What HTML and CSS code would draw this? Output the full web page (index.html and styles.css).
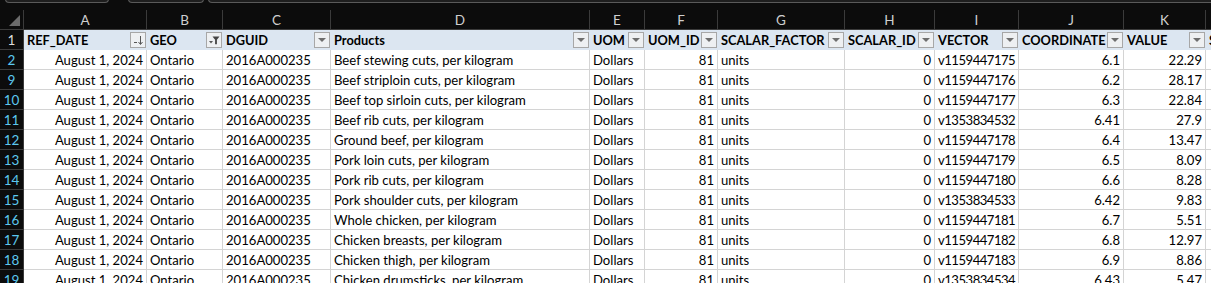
FILE: index.html
```html
<!DOCTYPE html>
<html>
<head>
<meta charset="utf-8">
<link rel="stylesheet" href="styles.css">
</head>
<body>
<div class="topbar">
  <div class="tb tb1"></div>
  <div class="tb tb2"></div>
  <div class="tb tb3"></div>
</div>
<div class="sheet">
  <div class="ch corner"><span class="tri"></span></div>
  <div class="ch">A</div><div class="ch">B</div><div class="ch">C</div><div class="ch">D</div><div class="ch">E</div><div class="ch">F</div><div class="ch">G</div><div class="ch">H</div><div class="ch">I</div><div class="ch">J</div><div class="ch">K</div><div class="ch"></div>

  <div class="rh first">1</div>
  <div class="hd"><span>REF_DATE</span><span class="fb"><svg width="14" height="14" viewBox="0 0 14 14"><path d="M3 9.5h3" stroke="#555" stroke-width="1"/><path d="M9.5 3v8" stroke="#555" stroke-width="1"/><path d="M7.5 9l2 2.5 2-2.5" fill="none" stroke="#555" stroke-width="1"/></svg></span></div>
  <div class="hd"><span>GEO</span><span class="fb"><svg width="14" height="14" viewBox="0 0 14 14"><path d="M2 8h4l-2 2.5z" fill="#555"/><path d="M5.5 3.5h7l-2.6 3.2v4.5h-1.8v-4.5z" fill="#444"/></svg></span></div>
  <div class="hd"><span>DGUID</span><span class="fb"><i class="dd"></i></span></div>
  <div class="hd"><span>Products</span><span class="fb"><i class="dd"></i></span></div>
  <div class="hd"><span>UOM</span><span class="fb"><i class="dd"></i></span></div>
  <div class="hd"><span>UOM_ID</span><span class="fb"><i class="dd"></i></span></div>
  <div class="hd"><span>SCALAR_FACTOR</span><span class="fb"><i class="dd"></i></span></div>
  <div class="hd"><span>SCALAR_ID</span><span class="fb"><i class="dd"></i></span></div>
  <div class="hd"><span>VECTOR</span><span class="fb"><i class="dd"></i></span></div>
  <div class="hd"><span>COORDINATE</span><span class="fb"><i class="dd"></i></span></div>
  <div class="hd"><span>VALUE</span><span class="fb"><i class="dd"></i></span></div>
  <div class="hd"><span>S</span></div>

  <div class="rh">2</div><div class="c r">August 1, 2024</div><div class="c">Ontario</div><div class="c">2016A000235</div><div class="c">Beef stewing cuts, per kilogram</div><div class="c">Dollars</div><div class="c r">81</div><div class="c">units</div><div class="c r">0</div><div class="c v">v1159447175</div><div class="c r">6.1</div><div class="c r">22.29</div><div class="c"></div>
  <div class="rh">9</div><div class="c r">August 1, 2024</div><div class="c">Ontario</div><div class="c">2016A000235</div><div class="c">Beef striploin cuts, per kilogram</div><div class="c">Dollars</div><div class="c r">81</div><div class="c">units</div><div class="c r">0</div><div class="c v">v1159447176</div><div class="c r">6.2</div><div class="c r">28.17</div><div class="c"></div>
  <div class="rh">10</div><div class="c r">August 1, 2024</div><div class="c">Ontario</div><div class="c">2016A000235</div><div class="c">Beef top sirloin cuts, per kilogram</div><div class="c">Dollars</div><div class="c r">81</div><div class="c">units</div><div class="c r">0</div><div class="c v">v1159447177</div><div class="c r">6.3</div><div class="c r">22.84</div><div class="c"></div>
  <div class="rh">11</div><div class="c r">August 1, 2024</div><div class="c">Ontario</div><div class="c">2016A000235</div><div class="c">Beef rib cuts, per kilogram</div><div class="c">Dollars</div><div class="c r">81</div><div class="c">units</div><div class="c r">0</div><div class="c v">v1353834532</div><div class="c r">6.41</div><div class="c r">27.9</div><div class="c"></div>
  <div class="rh">12</div><div class="c r">August 1, 2024</div><div class="c">Ontario</div><div class="c">2016A000235</div><div class="c">Ground beef, per kilogram</div><div class="c">Dollars</div><div class="c r">81</div><div class="c">units</div><div class="c r">0</div><div class="c v">v1159447178</div><div class="c r">6.4</div><div class="c r">13.47</div><div class="c"></div>
  <div class="rh">13</div><div class="c r">August 1, 2024</div><div class="c">Ontario</div><div class="c">2016A000235</div><div class="c">Pork loin cuts, per kilogram</div><div class="c">Dollars</div><div class="c r">81</div><div class="c">units</div><div class="c r">0</div><div class="c v">v1159447179</div><div class="c r">6.5</div><div class="c r">8.09</div><div class="c"></div>
  <div class="rh">14</div><div class="c r">August 1, 2024</div><div class="c">Ontario</div><div class="c">2016A000235</div><div class="c">Pork rib cuts, per kilogram</div><div class="c">Dollars</div><div class="c r">81</div><div class="c">units</div><div class="c r">0</div><div class="c v">v1159447180</div><div class="c r">6.6</div><div class="c r">8.28</div><div class="c"></div>
  <div class="rh">15</div><div class="c r">August 1, 2024</div><div class="c">Ontario</div><div class="c">2016A000235</div><div class="c">Pork shoulder cuts, per kilogram</div><div class="c">Dollars</div><div class="c r">81</div><div class="c">units</div><div class="c r">0</div><div class="c v">v1353834533</div><div class="c r">6.42</div><div class="c r">9.83</div><div class="c"></div>
  <div class="rh">16</div><div class="c r">August 1, 2024</div><div class="c">Ontario</div><div class="c">2016A000235</div><div class="c">Whole chicken, per kilogram</div><div class="c">Dollars</div><div class="c r">81</div><div class="c">units</div><div class="c r">0</div><div class="c v">v1159447181</div><div class="c r">6.7</div><div class="c r">5.51</div><div class="c"></div>
  <div class="rh">17</div><div class="c r">August 1, 2024</div><div class="c">Ontario</div><div class="c">2016A000235</div><div class="c">Chicken breasts, per kilogram</div><div class="c">Dollars</div><div class="c r">81</div><div class="c">units</div><div class="c r">0</div><div class="c v">v1159447182</div><div class="c r">6.8</div><div class="c r">12.97</div><div class="c"></div>
  <div class="rh">18</div><div class="c r">August 1, 2024</div><div class="c">Ontario</div><div class="c">2016A000235</div><div class="c">Chicken thigh, per kilogram</div><div class="c">Dollars</div><div class="c r">81</div><div class="c">units</div><div class="c r">0</div><div class="c v">v1159447183</div><div class="c r">6.9</div><div class="c r">8.86</div><div class="c"></div>
  <div class="rh">19</div><div class="c r">August 1, 2024</div><div class="c">Ontario</div><div class="c">2016A000235</div><div class="c">Chicken drumsticks, per kilogram</div><div class="c">Dollars</div><div class="c r">81</div><div class="c">units</div><div class="c r">0</div><div class="c v">v1353834534</div><div class="c r">6.43</div><div class="c r">5.47</div><div class="c"></div>
</div>
</body>
</html>
```

FILE: styles.css
```css
html, body {
  margin: 0;
  padding: 0;
  background: #0c0c0c;
  overflow: hidden;
}
body {
  font-family: Lato, "Liberation Sans", sans-serif;
  font-size: 13.1px;
  width: 1211px;
  height: 283px;
}
.topbar {
  height: 10px;
  display: flex;
  background: #0c0c0c;
}
.tb {
  height: 3px;
  margin-top: -1px;
  border: 1px solid #5a5a5a;
  border-top: none;
  border-radius: 0 0 5px 5px;
  background: #1e1e1e;
}
.tb1 { width: 102px; margin-left: 5px; }
.tb2 { width: 74px; margin-left: 19px; }
.tb3 { flex: 1; margin-left: 4px; border-right: none; border-radius: 0 0 0 5px; }

.sheet {
  display: grid;
  grid-template-columns: 24px 123px 76px 108px 259px 55px 73px 127px 90px 84px 105px 82px 1fr;
  grid-auto-rows: 20px;
}
.ch {
  background: #0c0c0c;
  color: #cfcfcf;
  border-right: 1px solid #3b3b3b;
  border-bottom: 1px solid #3b3b3b;
  display: flex;
  align-items: center;
  justify-content: center;
  font-size: 13.5px;
  box-sizing: border-box;
}
.corner {
  justify-content: flex-end;
  align-items: flex-end;
}
.tri {
  width: 0;
  height: 0;
  border-left: 11px solid transparent;
  border-bottom: 11px solid #6b6b6b;
  margin: 0 3px 3px 0;
}
.rh {
  background: #0c0c0c;
  color: #5cc8ef;
  border-right: 1px solid #3b3b3b;
  border-bottom: 1px solid #3b3b3b;
  display: flex;
  align-items: center;
  justify-content: center;
  font-size: 13.5px;
  box-sizing: border-box;
}
.rh.first { color: #dcdcdc; }
.hd {
  background: #dce6f1;
  color: #000;
  font-weight: bold;
  font-size: 12.8px;
  border-right: 1px solid #dce6f1;
  border-bottom: 1px solid #dce6f1;
  display: flex;
  align-items: center;
  padding-left: 3px;
  box-sizing: border-box;
  overflow: hidden;
  white-space: nowrap;
}
.fb {
  margin-left: auto;
  width: 16px;
  height: 16px;
  box-sizing: border-box;
  border: 1px solid #a7a7a7;
  background: #eef0f2;
  display: flex;
  align-items: center;
  justify-content: center;
  flex: none;
}
.dd {
  width: 0;
  height: 0;
  border-left: 4px solid transparent;
  border-right: 4px solid transparent;
  border-top: 4px solid #6e6e6e;
  margin-top: 1px;
}
.c {
  background: #fff;
  color: #000;
  border-right: 1px solid #d4d4d4;
  border-bottom: 1px solid #d4d4d4;
  display: flex;
  align-items: center;
  padding: 0 3px;
  box-sizing: border-box;
  white-space: nowrap;
  overflow: hidden;
}
.c.r { justify-content: flex-end; }
.c.v { letter-spacing: -0.5px; }
```
